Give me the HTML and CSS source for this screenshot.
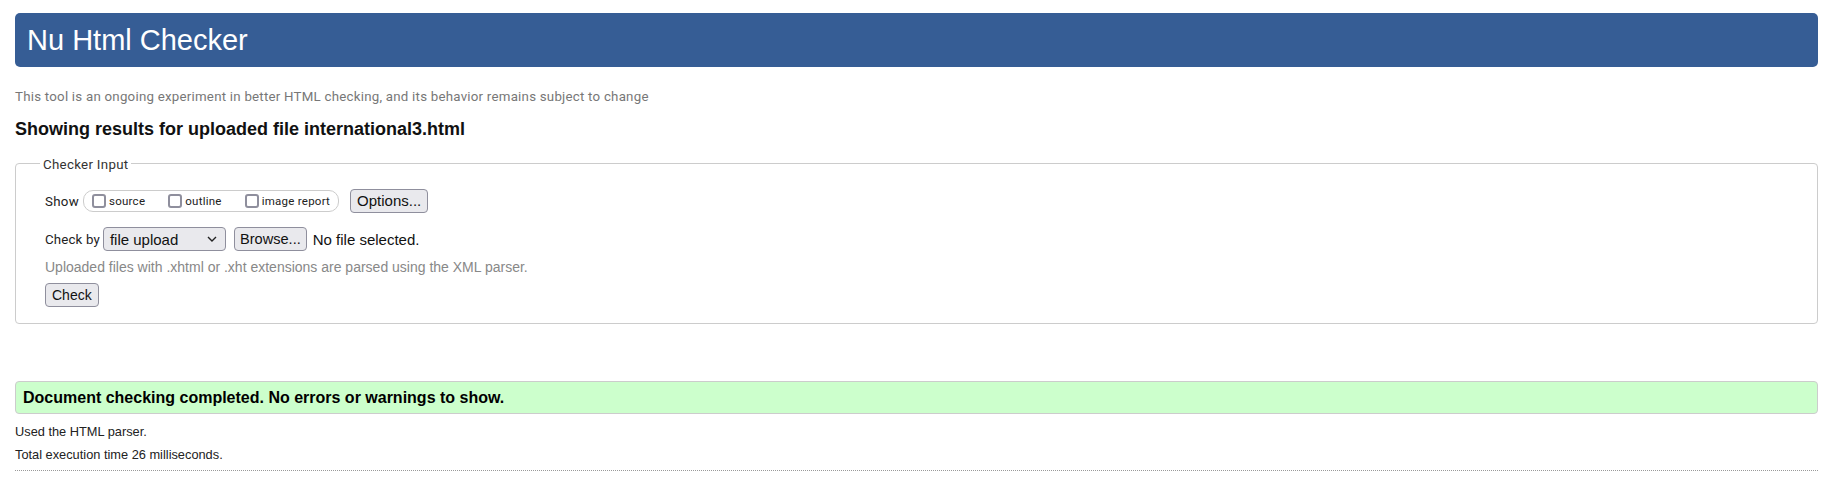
FILE: index.html
```html
<!DOCTYPE html>
<html lang="en">
<head>
<meta charset="utf-8">
<title>Nu Html Checker</title>
<link rel="stylesheet" href="styles.css">
</head>
<body>
<header class="banner"><h1 class="banner-title">Nu Html Checker</h1></header>
<p class="tagline">This tool is an ongoing experiment in better HTML checking, and its behavior remains subject to change</p>
<h2 class="results-title">Showing results for uploaded file international3.html</h2>
<form class="checker-form">
  <fieldset class="checker-input">
    <legend class="checker-legend">Checker Input</legend>
    <div class="row show-row">
      <span class="row-label">Show</span>
      <span class="pill">
        <label class="opt"><span class="box"></span>source</label>
        <label class="opt"><span class="box"></span>outline</label>
        <label class="opt"><span class="box"></span>image report</label>
      </span>
      <button type="button" class="btn options-btn">Options...</button>
    </div>
    <div class="row checkby-row">
      <span class="row-label">Check by</span>
      <span class="select">file upload<svg class="chev" width="10" height="6" viewBox="0 0 10 6"><path d="M1 1l4 4 4-4" fill="none" stroke="#222" stroke-width="1.4"/></svg></span>
      <button type="button" class="btn browse-btn">Browse...</button>
      <span class="file-status">No file selected.</span>
    </div>
    <p class="hint">Uploaded files with .xhtml or .xht extensions are parsed using the XML parser.</p>
    <button type="button" class="btn check-btn">Check</button>
  </fieldset>
</form>
<p class="success">Document checking completed. No errors or warnings to show.</p>
<div class="details">
  <p class="detail">Used the HTML parser.</p>
  <p class="detail">Total execution time 26 milliseconds.</p>
</div>
</body>
</html>
```
FILE: styles.css
```css
html, body {
  margin: 0;
  background: #ffffff;
}
body {
  padding: 13px 29px 0 15px;
  font-family: "Liberation Sans", Arial, sans-serif;
  color: #111;
}
.banner {
  background: #365d95;
  border-radius: 5px;
  height: 54px;
  display: flex;
  align-items: center;
  padding-left: 12px;
}
.banner-title {
  margin: 0;
  font-weight: normal;
  font-size: 29px;
  line-height: 34px;
  color: #ffffff;
}
.tagline {
  margin: 22px 0 0;
  font-family: Roboto, "Noto Sans", sans-serif;
  font-size: 13.3px;
  letter-spacing: 0.23px;
  line-height: 16px;
  color: #777;
}
.results-title {
  margin: 13px 0 0;
  font-size: 18px;
  line-height: 22px;
  font-weight: bold;
  color: #111;
}
.checker-form {
  margin: 13px 0 0;
}
.checker-input {
  margin: 0;
  border: 1px solid #cccccc;
  border-radius: 4px;
  padding: 0 29px 16px 29px;
}
.checker-legend {
  margin-left: -5px;
  padding: 4px 3px 0;
  font-family: Roboto, "Noto Sans", sans-serif;
  font-size: 13.3px;
  letter-spacing: 0.3px;
  line-height: 16px;
  color: #333;
}
.row {
  display: flex;
  align-items: center;
  height: 24px;
}
.show-row {
  margin-top: 16px;
}
.checkby-row {
  margin-top: 14px;
}
.row-label {
  font-family: Roboto, "Noto Sans", sans-serif;
  font-size: 13.3px;
  letter-spacing: 0.3px;
  color: #222;
  margin-right: 4px;
}
.checkby-row .row-label {
  letter-spacing: 0.15px;
  margin-right: 3px;
}
.pill {
  display: flex;
  align-items: center;
  gap: 23px;
  height: 20px;
  border: 1px solid #cccccc;
  border-radius: 10px;
  padding: 0 8px 0 8px;
  margin-right: 11px;
}
.opt {
  display: flex;
  align-items: center;
  gap: 3px;
  font-family: Roboto, "Noto Sans", sans-serif;
  font-size: 11.5px;
  letter-spacing: 0.25px;
  color: #222;
}
.box {
  width: 10px;
  height: 10px;
  border: 2px solid #8f8f9d;
  border-radius: 3px;
  background: #fff;
}
.btn {
  font-family: "Liberation Sans", Arial, sans-serif;
  font-size: 15px;
  color: #111;
  background: #e9e9ed;
  border: 1px solid #8f8f9d;
  border-radius: 4px;
  height: 24px;
  padding: 0 6px;
  margin: 0;
  line-height: 20px;
}
.browse-btn {
  padding: 0 5px;
  font-size: 14.6px;
}
.select {
  box-sizing: border-box;
  display: flex;
  align-items: center;
  justify-content: space-between;
  width: 123px;
  height: 24px;
  padding: 0 8px 0 6px;
  font-size: 15px;
  color: #111;
  background: #e9e9ed;
  border: 1px solid #8f8f9d;
  border-radius: 4px;
  margin-right: 8px;
}
.chev {
  display: block;
}
.file-status {
  margin-left: 6px;
  font-size: 15px;
  color: #111;
}
.hint {
  margin: 8px 0 8px;
  font-size: 14px;
  line-height: 16px;
  color: #888;
}
.check-btn {
  display: block;
  font-size: 14px;
  padding: 0 6px;
}
.success {
  margin: 57px 0 0;
  height: 31px;
  display: flex;
  align-items: center;
  padding-left: 7px;
  background: #ccffcc;
  border: 1px solid #cccccc;
  border-radius: 4px;
  font-size: 16px;
  font-weight: bold;
  color: #000;
}
.details {
  margin-top: 10px;
  padding-bottom: 8px;
  border-bottom: 1px dotted #999;
}
.detail {
  margin: 0 0 8px;
  font-size: 12.8px;
  line-height: 15px;
  color: #222;
}
.detail:last-child {
  margin-bottom: 0;
}
```
